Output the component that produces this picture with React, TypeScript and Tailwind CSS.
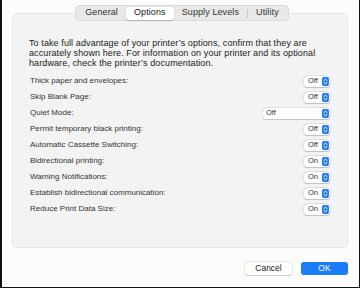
import React from 'react';

const options: { label: string; value: string; wide?: boolean }[] = [
  { label: 'Thick paper and envelopes:', value: 'Off' },
  { label: 'Skip Blank Page:', value: 'Off' },
  { label: 'Quiet Mode:', value: 'Off', wide: true },
  { label: 'Permit temporary black printing:', value: 'Off' },
  { label: 'Automatic Cassette Switching:', value: 'Off' },
  { label: 'Bidirectional printing:', value: 'On' },
  { label: 'Warning Notifications:', value: 'On' },
  { label: 'Establish bidirectional communication:', value: 'On' },
  { label: 'Reduce Print Data Size:', value: 'On' },
];

const Stepper = () => (
  <span className="w-[7px] h-[9px] rounded-[2px] bg-[#1f7bf4] flex items-center justify-center">
    <svg width="5" height="7" viewBox="0 0 5 7" fill="none" stroke="white" strokeWidth="1" strokeLinecap="round" strokeLinejoin="round">
      <path d="M1 2.6 L2.5 1.2 L4 2.6" />
      <path d="M1 4.4 L2.5 5.8 L4 4.4" />
    </svg>
  </span>
);

const Popup = ({ value, wide }: { value: string; wide?: boolean }) => (
  <div
    className={`h-[11px] bg-white rounded-[3px] shadow-[0_0_0_0.5px_rgba(0,0,0,0.12),0_0.5px_1px_rgba(0,0,0,0.15)] flex items-center justify-between pr-[1px] ${
      wide ? 'w-[67px] pl-[3px]' : 'w-[26px] pl-[4px]'
    }`}
  >
    <span className="text-[7.5px] leading-none text-[#333]">{value}</span>
    <Stepper />
  </div>
);

const tabs = ['General', 'Options', 'Supply Levels', 'Utility'];

export default function App() {
  return (
    <div className="w-[360px] h-[288px] bg-[#fcfcfc] border-l-2 border-r border-b border-[#111] flex flex-col pl-[10px] pr-[11px] pt-[5px] font-['Liberation_Sans',Arial,sans-serif] text-[#222]">
      <div className="relative z-10 self-center ml-[4px] flex items-center h-[16px] rounded-[4px] bg-[#e8e8e8] border border-[#dcdcdc] px-[1px]">
        {tabs.map((t, i) => (
          <React.Fragment key={t}>
            {i === 3 && <span className="w-px h-[9px] bg-[#c8c8c8]" />}
            <span
              className={`h-[13px] flex items-center px-[8px] text-[9px] tracking-[0.1px] ${
                t === 'Options'
                  ? 'bg-white rounded-[3px] shadow-[0_0.5px_1px_rgba(0,0,0,0.2)] text-[#222]'
                  : 'text-[#333]'
              }`}
            >
              {t}
            </span>
          </React.Fragment>
        ))}
      </div>

      <div className="-mt-[8px] h-[235px] rounded-[5px] bg-[#f3f3f3] border border-[#e6e6e6] pl-[16px] pr-[17px] pt-[24px]">
        <p className="text-[9px] leading-[10px] tracking-[0.1px] text-[#222] w-[292px]">
          To take full advantage of your printer’s options, confirm that they are accurately shown here. For information on your printer and its optional hardware, check the printer’s documentation.
        </p>
        <div className="mt-[5px] flex flex-col">
          {options.map((o) => (
            <div key={o.label} className="h-[16px] flex items-center justify-between pl-px">
              <span className="text-[8px] text-[#333]">{o.label}</span>
              <Popup value={o.value} wide={o.wide} />
            </div>
          ))}
        </div>
      </div>

      <div className="mt-[14px] flex justify-end gap-[9px]">
        <button className="w-[47px] h-[13px] rounded-[3px] bg-white shadow-[0_0_0_0.5px_rgba(0,0,0,0.12),0_0.5px_1px_rgba(0,0,0,0.15)] text-[8.5px] text-[#222] flex items-center justify-center">
          Cancel
        </button>
        <button className="w-[47px] h-[13px] rounded-[3px] bg-[#1a7cf6] text-[8.5px] text-white flex items-center justify-center">
          OK
        </button>
      </div>
    </div>
  );
}
